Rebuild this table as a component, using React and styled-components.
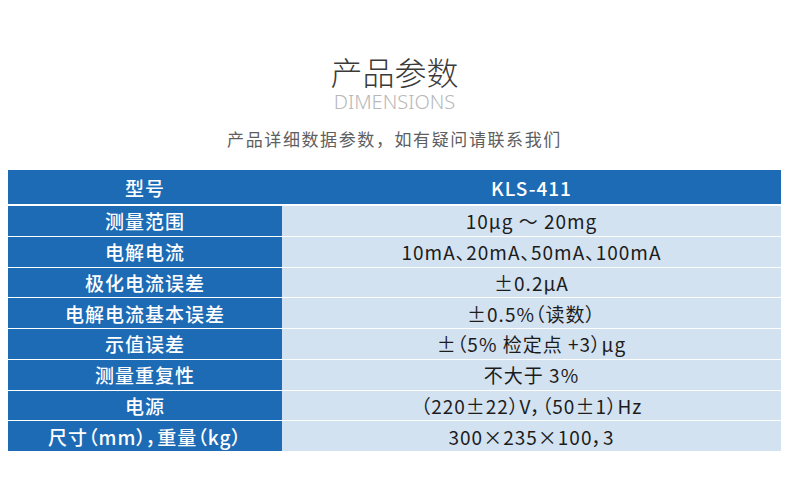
import React from "react";
import styled, { createGlobalStyle } from "styled-components";

const GlobalStyle = createGlobalStyle`
    html, body {
        margin: 0;
        padding: 0;
        background: #ffffff;
        font-family: "Noto Sans CJK SC", "Noto Sans", sans-serif;
    }
`;

const Page = styled.div`
    width: 790px;
    height: 494px;
    padding: 51px 9px 0 8px;
    box-sizing: border-box;
    display: flex;
    flex-direction: column;
    align-items: center;
`;

const Title = styled.h1`
    margin: 0;
    font-size: 32px;
    font-weight: 300;
    line-height: 40px;
    color: #3a3a3a;
`;

const SubTitle = styled.div`
    font-family: "Noto Sans", "Open Sans", sans-serif;
    font-size: 20px;
    font-weight: 300;
    line-height: 22px;
    color: #b8b8b8;
`;

const Caption = styled.p`
    margin: 14px 0 0;
    font-size: 17px;
    line-height: 24px;
    color: #5e5e5e;
    letter-spacing: 1.6px;
`;

const Table = styled.div`
    margin-top: 19px;
    width: 100%;
    display: flex;
    flex-direction: column;
`;

const HeadRow = styled.div`
    display: grid;
    grid-template-columns: 274px 1fr;
    height: 34px;
    background: #1e6bb5;
    margin-bottom: 2px;
`;

const Body = styled.div`
    display: grid;
    grid-template-columns: 274px 1fr;
    grid-auto-rows: 29.75px;
    row-gap: 1px;
`;

const Cell = styled.div`
    display: flex;
    align-items: center;
    justify-content: center;
    font-size: 19px;
    letter-spacing: 1px;
    white-space: nowrap;
    font-feature-settings: "palt";
    color: ${(p) => (p.$label ? "#ffffff" : "#1c1c1c")};
    font-weight: ${(p) => (p.$label ? 500 : 400)};
    background: ${(p) => (p.$label ? "#1e6bb5" : "#d3e2f1")};
`;

const HeadCell = styled(Cell)`
    background: transparent;
    color: #ffffff;
    font-weight: 500;
`;

const rows = [
    ["测量范围", "10μg ～ 20mg"],
    ["电解电流", "10mA、20mA、50mA、100mA"],
    ["极化电流误差", "±0.2μA"],
    ["电解电流基本误差", "±0.5%（读数）"],
    ["示值误差", "±（5% 检定点 +3）μg"],
    ["测量重复性", "不大于 3%"],
    ["电源", "（220±22）V，（50±1）Hz"],
    ["尺寸（mm），重量（kg）", "300×235×100，3"],
];

export default function App() {
    return (
        <Page>
            <GlobalStyle />
            <Title>产品参数</Title>
            <SubTitle>DIMENSIONS</SubTitle>
            <Caption>产品详细数据参数，如有疑问请联系我们</Caption>
            <Table>
                <HeadRow>
                    <HeadCell>型号</HeadCell>
                    <HeadCell>KLS-411</HeadCell>
                </HeadRow>
                <Body>
                    {rows.map(([label, value]) => (
                        <React.Fragment key={label}>
                            <Cell $label>{label}</Cell>
                            <Cell>{value}</Cell>
                        </React.Fragment>
                    ))}
                </Body>
            </Table>
        </Page>
    );
}
